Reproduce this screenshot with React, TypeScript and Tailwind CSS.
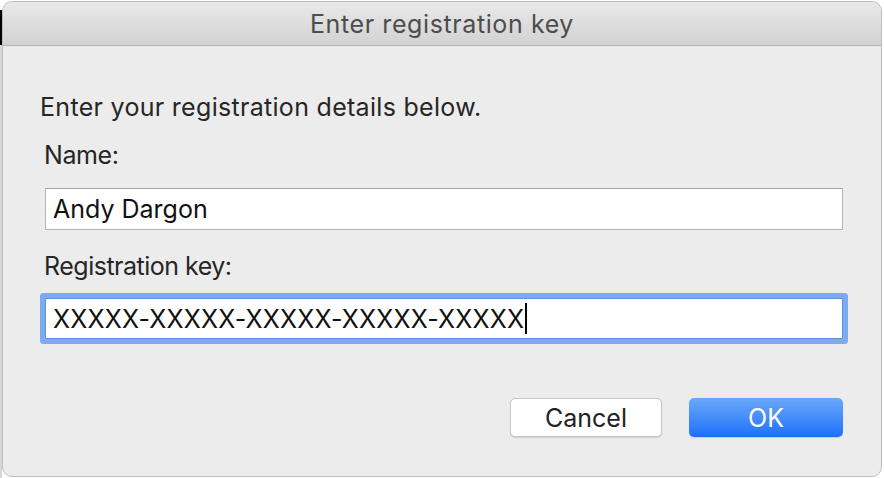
const App = () => {
  return (
    <div className="w-[884px] h-[478px] bg-white flex overflow-hidden font-['Inter','Liberation_Sans',sans-serif]">
      {/* sliver of the window behind */}
      <div className="w-[2px] flex flex-col">
        <div className="h-[10px] bg-white" />
        <div className="h-[35px] bg-black" />
        <div className="flex-1 bg-[#d6d6d6]" />
      </div>

      <div className="mt-[1px] w-[880px] h-[476px] flex flex-col rounded-[10px] border border-[#bdbdbd] bg-[#ececec] overflow-hidden">
        <div className="h-[44px] shrink-0 flex items-center justify-center bg-gradient-to-b from-[#e9e9e9] to-[#d2d2d2] border-b border-[#b2b2b2]">
          <span className="text-[25px] leading-[30px] text-[#4d4d4d] tracking-[0.6px]">
            Enter registration key
          </span>
        </div>

        <div className="flex-1 flex flex-col pt-[46px] pl-[37px] pr-[38px]">
          <p className="text-[25px] leading-[30px] text-[#262626] tracking-[0.3px]">
            Enter your registration details below.
          </p>

          <label className="mt-[18px] ml-[4px] text-[25px] leading-[30px] text-[#262626] tracking-[-0.4px]">
            Name:
          </label>
          <div className="mt-[18px] ml-[5px] h-[42px] flex items-center bg-white border border-[#b3b3b3] border-t-[#a3a3a3] pl-[7px]">
            <span className="text-[25px] leading-[30px] text-[#111]">Andy Dargon</span>
          </div>

          <label className="mt-[21px] ml-[4px] text-[25px] leading-[30px] text-[#262626] tracking-[-0.5px]">
            Registration key:
          </label>
          <div className="mt-[17px] ml-[5px] h-[41px] flex items-center bg-white border border-[#5e91e1] rounded-[1px] shadow-[0_0_0_5px_#7eabef] pl-[7px]">
            <span className="text-[25px] leading-[30px] text-[#111] tracking-[0.2px]">
              XXXXX-XXXXX-XXXXX-XXXXX-XXXXX
            </span>
            <span className="ml-[1px] w-[2px] h-[31px] bg-black" />
          </div>

          <div className="mt-[59px] flex justify-end gap-[27px]">
            <button className="w-[152px] h-[39px] rounded-[5px] bg-white border border-[#c6c6c6] shadow-[0_1px_1px_rgba(0,0,0,0.12)] text-[25px] leading-[30px] text-[#222]">
              Cancel
            </button>
            <button className="w-[154px] h-[39px] rounded-[5px] bg-gradient-to-b from-[#6aa8f9] to-[#1a6ffb] shadow-[0_1px_1px_rgba(0,0,0,0.12)] text-[25px] leading-[30px] text-white">
              OK
            </button>
          </div>
        </div>
      </div>
    </div>
  );
};

export default App;
